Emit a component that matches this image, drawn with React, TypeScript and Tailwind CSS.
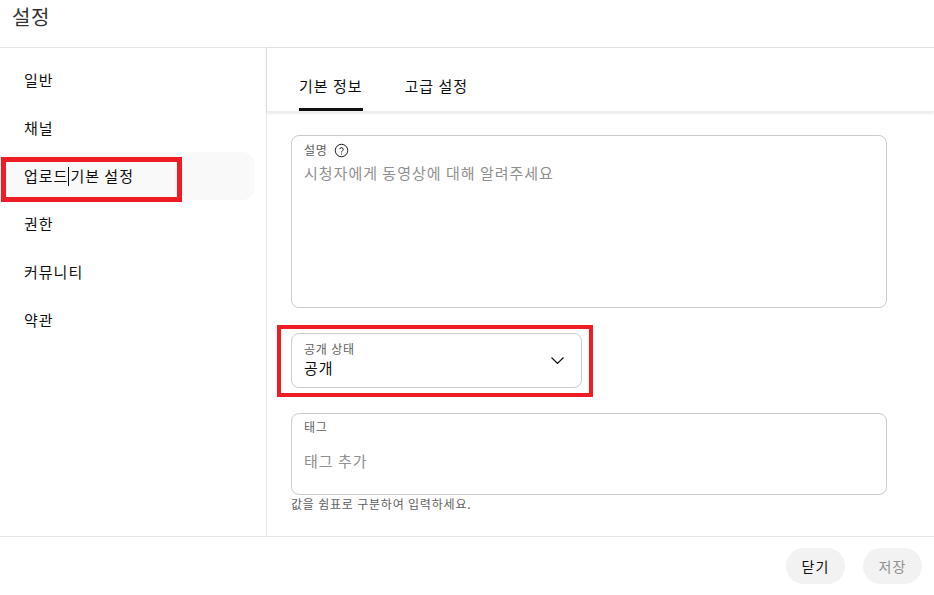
import React, { useState } from "react";

const font = { fontFamily: '"Noto Sans CJK KR", "Noto Sans", sans-serif' };

const navItems = ["일반", "채널", "업로드 기본 설정", "권한", "커뮤니티", "약관"];

function HelpIcon() {
  return (
    <svg width="15" height="15" viewBox="0 0 24 24" fill="none" stroke="#0f0f0f" strokeWidth="1.5">
      <circle cx="12" cy="12" r="10" />
      <path d="M9.2 9.3a2.9 2.9 0 0 1 5.6 1c0 1.9-2.8 2.4-2.8 4.2" strokeLinecap="round" />
      <circle cx="12" cy="17.6" r="0.9" fill="#0f0f0f" stroke="none" />
    </svg>
  );
}

function Chevron() {
  return (
    <svg width="15" height="9" viewBox="0 0 15 9" fill="none" stroke="#0f0f0f" strokeWidth="1.2">
      <path d="M1.5 1.5l6 6 6-6" />
    </svg>
  );
}

export default function App() {
  const [tab, setTab] = useState(0);
  const active = 2;

  return (
    <div className="w-[934px] h-[595px] flex flex-col bg-white text-[#0f0f0f]" style={font}>
      <header className="h-[48px] shrink-0 border-b border-[#e5e5e5] px-[12px] flex items-center">
        <h1 className="text-[20px] text-[#333] -mt-[14px] tracking-[0.5px]">설정</h1>
      </header>

      <div className="flex flex-1 min-h-0">
        <aside className="w-[267px] shrink-0 border-r border-[#e5e5e5] pt-[8px] pl-[2px] pr-[12px]">
          {navItems.map((name, i) => (
            <div
              key={name}
              className={
                "relative h-[48px] flex items-center pl-[22px] rounded-[12px] text-[15px] tracking-[1px] " +
                (i === active ? "bg-[#f9f9f9]" : "")
              }
            >
              {i === active ? (
                <>
                  <span>업로드</span>
                  <span className="inline-block w-px h-[19px] bg-[#0f0f0f] mr-[1px]" />
                  <span>기본 설정</span>
                  <div className="absolute left-[-1px] top-[5px] w-[181px] h-[45px] border-[5px] border-[#ee1c25]" />
                </>
              ) : (
                name
              )}
            </div>
          ))}
        </aside>

        <main className="flex-1 flex flex-col min-w-0">
          <div className="h-[64px] shrink-0 flex items-end gap-[42px] pl-[32px] shadow-[0_1px_3px_rgba(0,0,0,0.12)] border-b border-[#eee]">
            {["기본 정보", "고급 설정"].map((t, i) => (
              <button
                key={t}
                onClick={() => setTab(i)}
                className={
                  "h-[64px] flex items-center text-[15px] tracking-[1px] pt-[17px] border-b-[3px] " +
                  (tab === i ? "border-[#0f0f0f]" : "border-transparent")
                }
              >
                {t}
              </button>
            ))}
          </div>

          <div className="pl-[24px] pr-[47px] pt-[23px] flex flex-col">
            <div className="h-[173px] border border-[#ccc] rounded-[8px] px-[12px] pt-[5px]">
              <div className="flex items-center gap-[6px] text-[12px] tracking-[0.8px] text-[#606060] h-[18px]">
                설명 <HelpIcon />
              </div>
              <div className="text-[15px] tracking-[1px] text-[#909090] mt-[3px]">시청자에게 동영상에 대해 알려주세요</div>
            </div>

            <div className="relative mt-[25px] w-[291px]">
              <div className="h-[55px] border border-[#ccc] rounded-[8px] pl-[12px] pr-[16px] flex items-center justify-between">
                <div className="flex flex-col -mt-[4px]">
                  <span className="text-[12px] tracking-[0.8px] text-[#606060] leading-[18px]">공개 상태</span>
                  <span className="text-[15px] tracking-[1px] leading-[20px]">공개</span>
                </div>
                <Chevron />
              </div>
              <div className="absolute left-[-14px] top-[-8px] w-[316px] h-[72px] border-[4px] border-[#ee1c25]" />
            </div>

            <div className="mt-[25px] h-[82px] border border-[#ccc] rounded-[8px] px-[12px] pt-[4px]">
              <div className="text-[12px] tracking-[0.8px] text-[#606060] h-[18px]">태그</div>
              <div className="text-[15px] tracking-[1px] text-[#909090] mt-[14px]">태그 추가</div>
            </div>
            <div className="text-[12px] tracking-[0.8px] text-[#606060] mt-[0px]">값을 쉼표로 구분하여 입력하세요.</div>
          </div>
        </main>
      </div>

      <footer className="h-[59px] shrink-0 border-t border-[#e5e5e5] flex items-center justify-end gap-[18px] pr-[12px]">
        <button className="h-[36px] w-[59px] rounded-full bg-[#f2f2f2] text-[14px] tracking-[1px] text-[#0f0f0f]">닫기</button>
        <button className="h-[36px] w-[59px] rounded-full bg-[#f2f2f2] text-[14px] tracking-[1px] text-[#909090]">저장</button>
      </footer>
    </div>
  );
}
